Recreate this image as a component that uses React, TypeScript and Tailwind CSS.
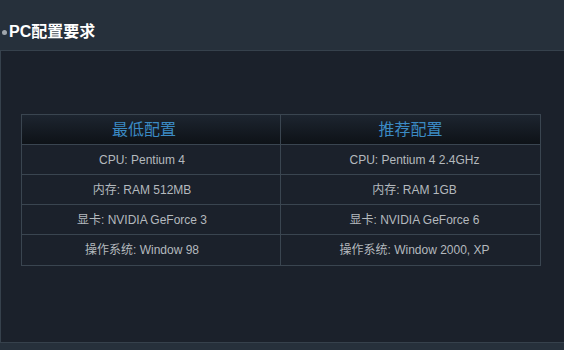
import React from "react";

const rows: [string, string][] = [
  ["CPU: Pentium 4", "CPU: Pentium 4 2.4GHz"],
  ["内存: RAM 512MB", "内存: RAM 1GB"],
  ["显卡: NVIDIA GeForce 3", "显卡: NVIDIA GeForce 6"],
  ["操作系统: Window 98", "操作系统: Window 2000, XP"],
];

export default function App() {
  return (
    <div
      className="w-[564px] h-[350px] bg-[#26303b] flex flex-col overflow-hidden"
      style={{ fontFamily: '"Liberation Sans", "Noto Sans CJK SC", sans-serif' }}
    >
      <div className="h-[50px] flex items-center pl-[2px] pt-[14px] shrink-0">
        <span className="w-[5px] h-[5px] rounded-full bg-[#a0a6ac] mr-[2px]" />
        <span className="text-[16px] font-bold text-white leading-none">PC配置要求</span>
      </div>
      <div className="h-[293px] shrink-0 bg-[#1b212b] border-t border-l border-b border-[#36414c] pt-[63px] pl-[20px]">
        <div className="w-[520px] border border-[#3a4550]">
          <div className="grid grid-cols-[259px_1fr] h-[30px] bg-gradient-to-b from-[#1d2530] to-[#0e1217] border-b border-[#3a4550]">
            <div className="flex items-center justify-center pr-[14px] border-r border-[#3a4550] text-[16px] text-[#3b8ac4]">最低配置</div>
            <div className="flex items-center justify-center text-[16px] text-[#3b8ac4]">推荐配置</div>
          </div>
          {rows.map((r, i) => (
            <div
              key={i}
              className={
                "grid grid-cols-[259px_1fr] h-[30px] " + (i < rows.length - 1 ? "border-b border-[#3a4550]" : "")
              }
            >
              <div className="flex items-center justify-center pr-[18px] border-r border-[#3a4550] text-[12px] text-[#b4b9be]">{r[0]}</div>
              <div className="flex items-center justify-center pl-[8px] text-[12px] text-[#b4b9be]">{r[1]}</div>
            </div>
          ))}
        </div>
      </div>
    </div>
  );
}
